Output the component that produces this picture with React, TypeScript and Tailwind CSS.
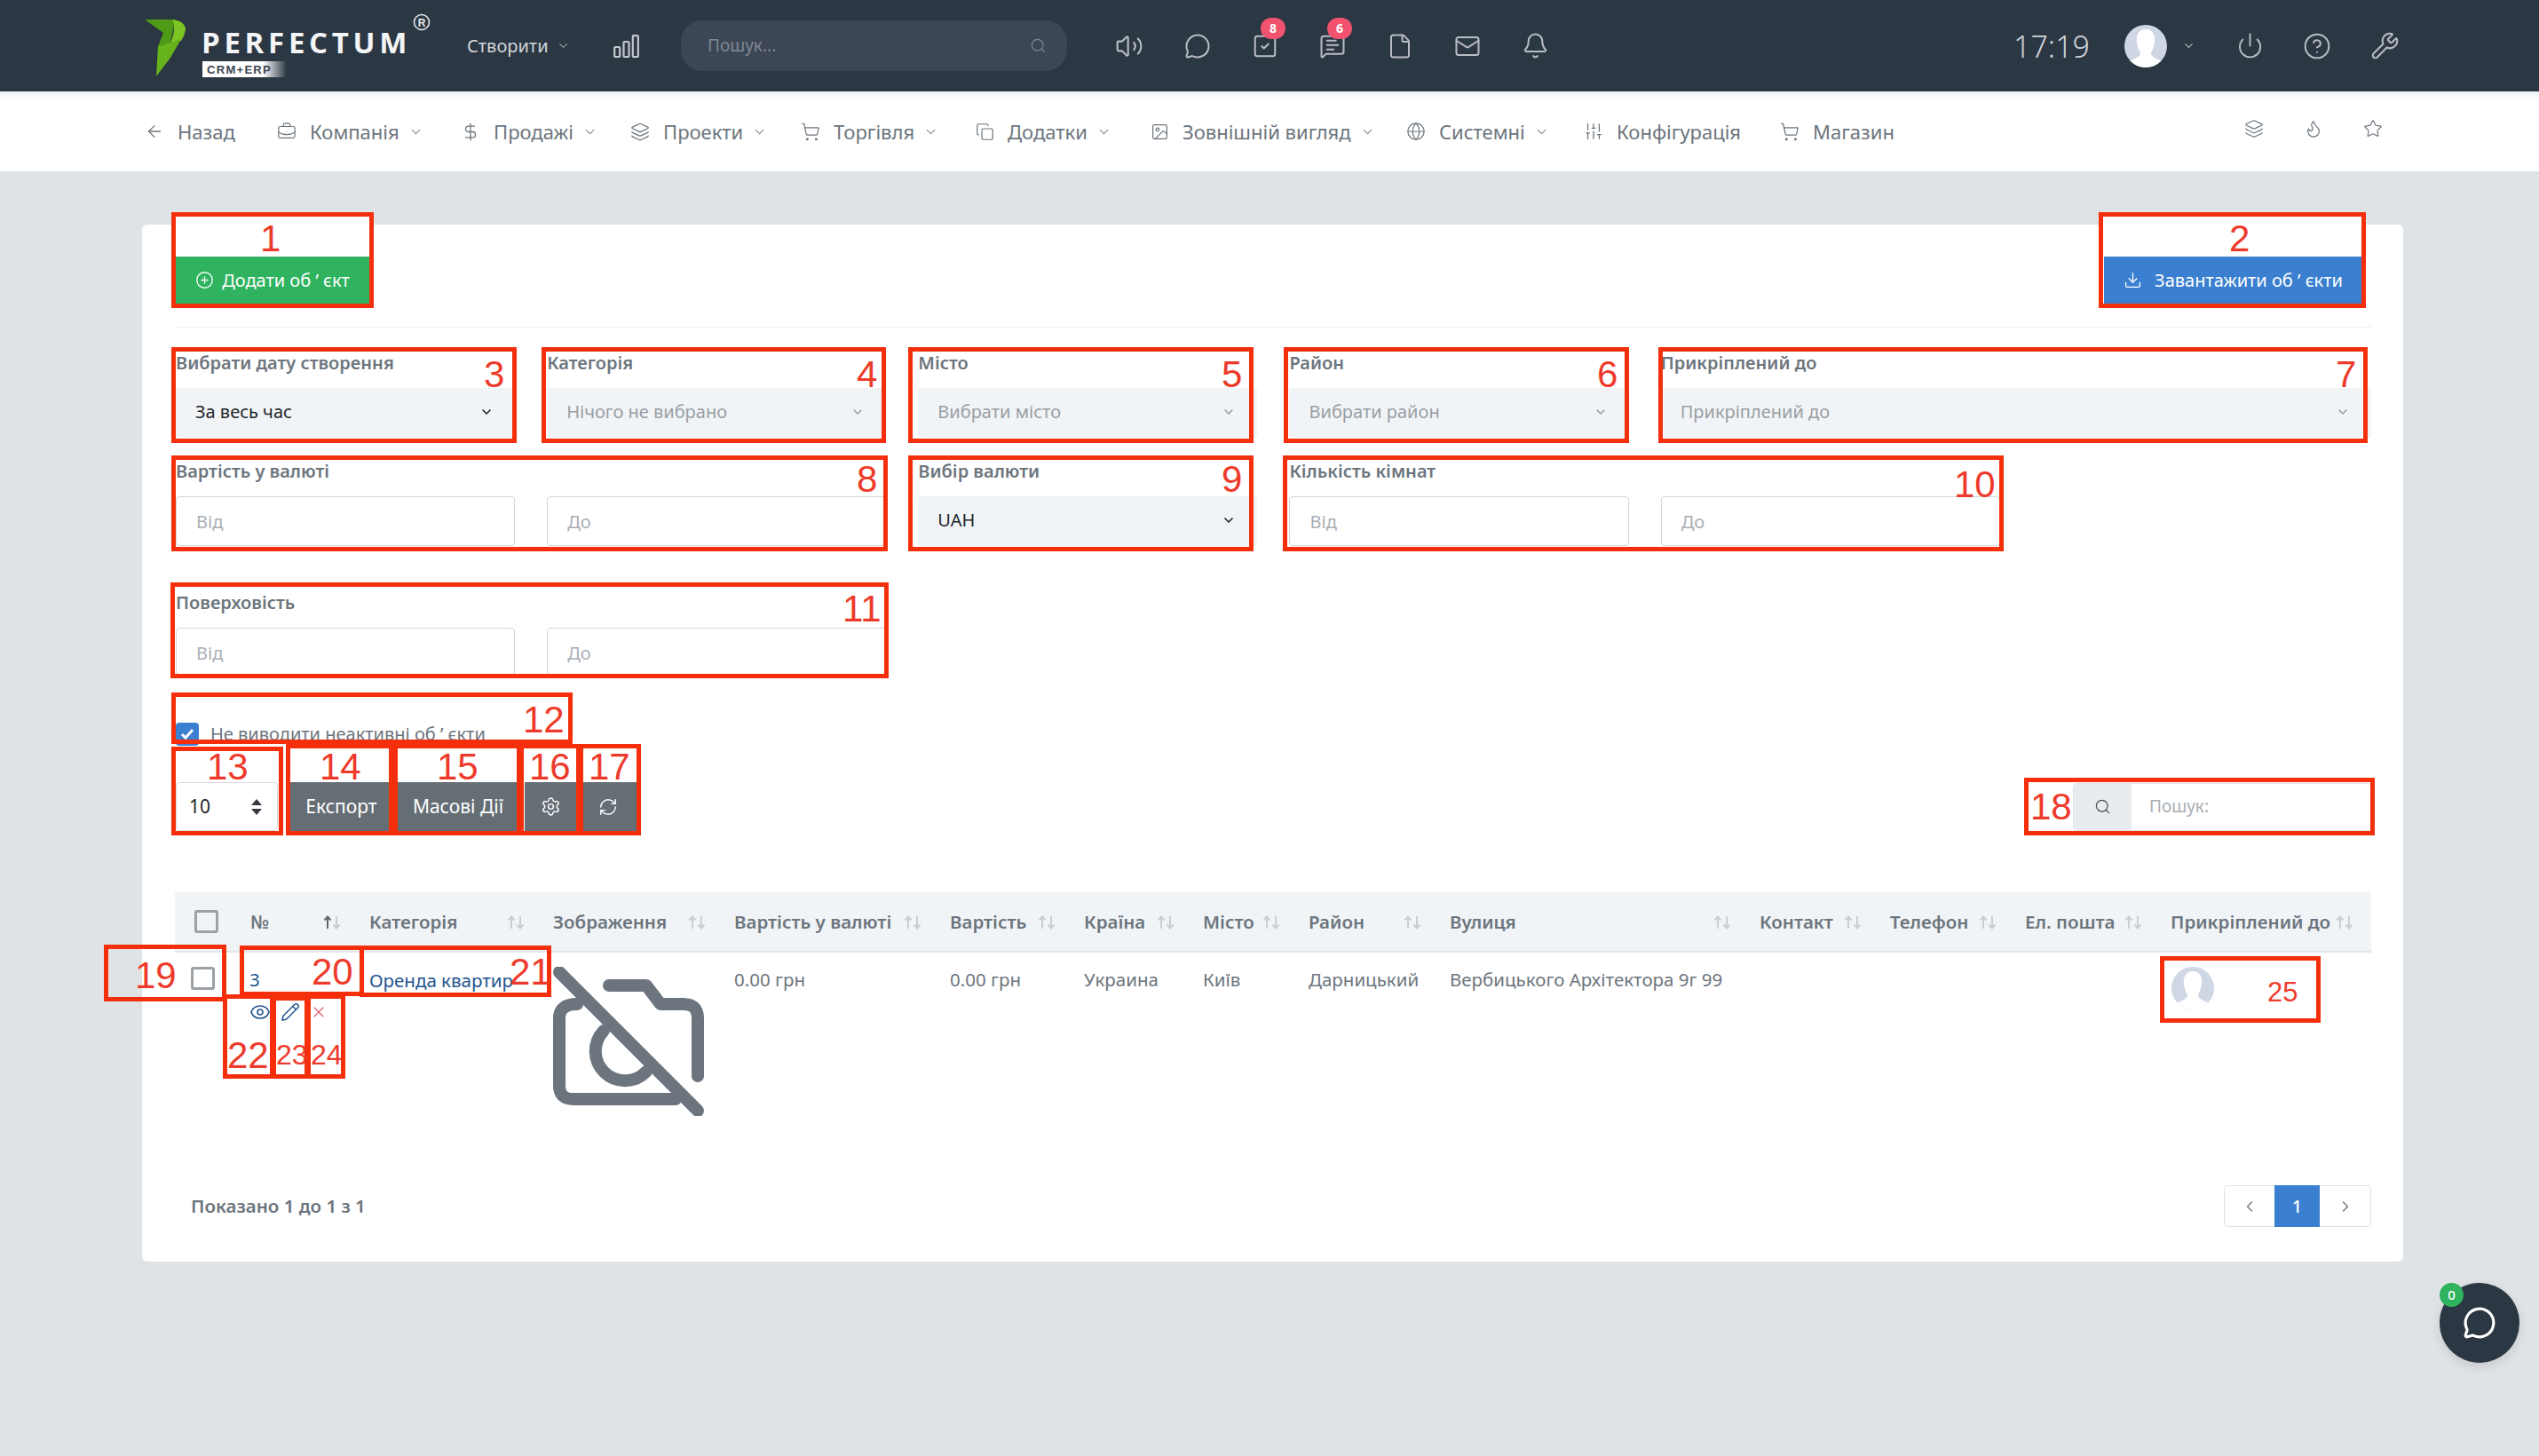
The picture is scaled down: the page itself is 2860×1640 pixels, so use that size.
import React from "react";
import {
  ArrowLeft, BriefcaseBusiness, ChevronDown, ChevronLeft, ChevronRight, CirclePlus, CircleHelp, Copy, DollarSign, Download,
  Eye, File, Flame, Globe, Image, Layers, Bell, Mail, MessageCircle, MessageSquareText, Pencil, Power, RefreshCw, Search, Settings,
  ShoppingCart, SlidersVertical, SquareCheck, Star, Volume2, Wrench, X,
} from "lucide-react";

const FONT = "font-['Noto_Sans','Open_Sans',sans-serif]";

function Logo() {
  return (
    <svg width="322" height="103" viewBox="163 0 322 103" className="shrink-0">
      <defs>
        <linearGradient id="fade" x1="0" x2="1" y1="0" y2="0">
          <stop offset="0.72" stopColor="#ffffff" />
          <stop offset="1" stopColor="#ffffff" stopOpacity="0" />
        </linearGradient>
      </defs>
      <polygon points="163,22 197,22 192,48 178,52 184,37" fill="#4f9a16" />
      <path d="M195,22 Q209,24 209,34 Q208,40 204,46 L192,48 Q198,36 195,22 Z" fill="#7cc522" />
      <polygon points="178,52 204,44 192,65 176,86" fill="#66b31c" />
      <text x="227" y="60" fontFamily="'Open Sans',sans-serif" fontWeight="700" fontSize="33" letterSpacing="4.7" fill="#f4f5f6">PERFECTUM</text>
      <circle cx="475" cy="25" r="8.5" fill="none" stroke="#e6e8ea" strokeWidth="1.6" />
      <text x="475" y="29.5" textAnchor="middle" fontFamily="'Liberation Sans',sans-serif" fontWeight="700" fontSize="12" fill="#e6e8ea">R</text>
      <rect x="228" y="69" width="95" height="18" fill="url(#fade)" />
      <text x="233" y="83" fontFamily="'Liberation Sans',sans-serif" fontWeight="700" fontSize="13" letterSpacing="1.3" fill="#3a4350">CRM+ERP</text>
    </svg>
  );
}

function Avatar() {
  return (
    <svg viewBox="0 0 48 48" className="w-[48px] h-[48px] shrink-0">
      <defs>
        <clipPath id="av"><circle cx="24" cy="24" r="24" /></clipPath>
      </defs>
      <g clipPath="url(#av)">
        <rect width="48" height="48" fill="#cfd6e4" />
        <path d="M24 5 C15 5 13 13 14 20 C15 26 17 29 18 32 C18 36 12 38 5 41 L5 48 L43 48 L43 41 C36 38 30 36 30 32 C31 29 33 26 34 20 C35 13 33 5 24 5 Z" fill="#ffffff" />
      </g>
    </svg>
  );
}

function Chart() {
  return (
    <svg width="29" height="26" viewBox="0 0 29 26" fill="none" stroke="#c4c8cd" strokeWidth="2.2" className="shrink-0">
      <rect x="1.2" y="14" width="6" height="11" rx="1" />
      <rect x="11.5" y="8" width="6" height="17" rx="1" />
      <rect x="21.8" y="1.2" width="6" height="23.8" rx="1" />
    </svg>
  );
}

function NavItem({ icon, label, chev, className }: { icon: React.ReactNode; label: string; chev?: boolean; className: string }) {
  return (
    <div className={`flex items-center shrink-0 ${className}`}>
      <span className="w-[22px] flex justify-center">{icon}</span>
      <span className="ml-[15px] text-[22px] text-[#6c757d] whitespace-nowrap">{label}</span>
      {chev && <ChevronDown size={17} strokeWidth={1.5} className="ml-[10px] text-[#7d858c]" />}
    </div>
  );
}

function Label({ children }: { children: React.ReactNode }) {
  return <div className="h-[40px] leading-[24px] text-[20px] font-semibold text-[#6c757d] whitespace-nowrap">{children}</div>;
}

function Select({ label, value, dark }: { label: string; value: string; dark?: boolean }) {
  return (
    <div>
      <Label>{label}</Label>
      <div className="h-[56px] bg-[#f1f4f7] rounded-[3px] pl-[22px] pr-[24px] pb-[2px] flex items-center justify-between">
        <span className={`text-[20px] ${dark ? "text-[#212529]" : "text-[#999ea4]"}`}>{value}</span>
        <ChevronDown size={16} strokeWidth={dark ? 2.5 : 2} className={dark ? "text-[#212529]" : "text-[#8f959b]"} />
      </div>
    </div>
  );
}

function Field({ placeholder }: { placeholder: string }) {
  return (
    <input
      placeholder={placeholder}
      className="w-full h-[56px] bg-white border border-[#d2d5d8] rounded-[4px] pl-[22px] text-[20px] placeholder:text-[#a9aeb4] outline-none"
    />
  );
}

function Range({ label }: { label: string }) {
  return (
    <div className="col-span-2">
      <Label>{label}</Label>
      <div className="grid grid-cols-2 gap-x-[36px]">
        <Field placeholder="Від" />
        <Field placeholder="До" />
      </div>
    </div>
  );
}

function SortIcon({ active }: { active?: boolean }) {
  return (
    <svg width="21" height="16" viewBox="0 0 21 16" fill="none" strokeWidth="2" className="absolute right-[19px] top-[26px]">
      <path d="M5 15V2M1.5 5.5L5 1.5L8.5 5.5" stroke={active ? "#5f666c" : "#c8ced3"} />
      <path d="M15 1V14M11.5 10.5L15 14.5L18.5 10.5" stroke="#c8ced3" />
    </svg>
  );
}

function Th({ label, active }: { label: string; active?: boolean }) {
  return (
    <th className="relative pl-[12px] text-left text-[20.5px] font-semibold text-[#6c757d] whitespace-nowrap">
      {label}
      <SortIcon active={active} />
    </th>
  );
}

function Box({ className }: { className: string }) {
  return <div className={`absolute border-[5px] border-[#f52f0c] pointer-events-none ${className}`} />;
}

function Num({ className, children }: { className: string; children: React.ReactNode }) {
  return <div className={`absolute font-['Liberation_Sans',sans-serif] leading-none text-[#ee3a2b] pointer-events-none ${className}`}>{children}</div>;
}

function CameraOff() {
  return (
    <svg width="170" height="168" viewBox="623 1088 170 168" fill="none" stroke="#6c757d" strokeWidth="14" strokeLinecap="round" strokeLinejoin="round">
      <path d="M630 1094L786 1250" />
      <path d="M686 1109H728L744 1130H770Q786 1130 786 1146V1211" />
      <path d="M650 1130Q630 1130 630 1146V1222Q630 1237 646 1237H761" />
      <path d="M680 1160A30 30 0 0 0 728 1206" />
    </svg>
  );
}

export default function App() {
  const iconTop = "text-[#b9bdc3]";
  return (
    <div className={`relative w-[2860px] h-[1640px] overflow-hidden bg-[#e0e3e5] ${FONT}`}>
      <header className="h-[103px] bg-[#2c3744] flex items-center pl-[163px] pr-[157px]">
        <Logo />
        <div className="ml-[41px] flex items-center text-[20px] text-[#d3d6da] whitespace-nowrap w-[165px]">
          Створити
          <ChevronDown size={15} strokeWidth={1.6} className="ml-[9px]" />
        </div>
        <Chart />
        <div className="ml-[47px] w-[435px] h-[57px] rounded-[24px] bg-[#3c4654] flex items-center justify-between pl-[30px] pr-[23px]">
          <span className="text-[19px] text-[#7f8893]">Пошук...</span>
          <Search size={19} strokeWidth={1.5} className="text-[#7f8893]" />
        </div>
        <div className={`ml-[54px] flex items-center gap-[46px] ${iconTop}`}>
          <Volume2 size={32} strokeWidth={1.6} />
          <MessageCircle size={30} strokeWidth={1.6} />
          <div className="relative">
            <SquareCheck size={30} strokeWidth={1.6} />
            <span className="absolute left-[10px] top-[-17px] w-[28px] h-[24px] rounded-full bg-[#f1536e] text-white text-[14px] font-bold flex items-center justify-center">8</span>
          </div>
          <div className="relative">
            <MessageSquareText size={30} strokeWidth={1.6} />
            <span className="absolute left-[9px] top-[-17px] w-[28px] h-[24px] rounded-full bg-[#f1536e] text-white text-[14px] font-bold flex items-center justify-center">6</span>
          </div>
          <File size={30} strokeWidth={1.6} />
          <Mail size={30} strokeWidth={1.6} />
          <Bell size={31} strokeWidth={1.6} />
        </div>
        <div className="ml-auto flex items-center">
          <span className="text-[34px] font-light text-[#cfd3d8] leading-none">17:19</span>
          <span className="ml-[39px]"><Avatar /></span>
          <ChevronDown size={15} strokeWidth={1.8} className="ml-[17px] text-[#b9bdc3]" />
          <div className={`ml-[46px] flex items-center gap-[44px] ${iconTop}`}>
            <Power size={31} strokeWidth={1.5} />
            <CircleHelp size={32} strokeWidth={1.5} />
            <Wrench size={33} strokeWidth={1.5} />
          </div>
        </div>
      </header>

      <nav className="h-[90px] bg-white shadow-[inset_0_14px_14px_-14px_#dfe1e4] flex items-center pl-[163px] pr-[176px]">
        <NavItem className="w-[149px]" label="Назад" icon={<ArrowLeft size={22} strokeWidth={1.4} className="text-[#6c757d]" />} />
        <NavItem className="w-[207px]" label="Компанія" chev icon={<BriefcaseBusiness size={22} strokeWidth={1.3} className="text-[#6c757d]" />} />
        <NavItem className="w-[191px]" label="Продажі" chev icon={<DollarSign size={23} strokeWidth={1.4} className="text-[#6c757d]" />} />
        <NavItem className="w-[192px]" label="Проекти" chev icon={<Layers size={23} strokeWidth={1.4} className="text-[#6c757d]" />} />
        <NavItem className="w-[196px]" label="Торгівля" chev icon={<ShoppingCart size={23} strokeWidth={1.3} className="text-[#6c757d]" />} />
        <NavItem className="w-[197px]" label="Додатки" chev icon={<Copy size={21} strokeWidth={1.4} className="text-[#6c757d]" />} />
        <NavItem className="w-[289px]" label="Зовнішній вигляд" chev icon={<Image size={21} strokeWidth={1.4} className="text-[#6c757d]" />} />
        <NavItem className="w-[200px]" label="Системні" chev icon={<Globe size={22} strokeWidth={1.3} className="text-[#6c757d]" />} />
        <NavItem className="w-[221px]" label="Конфігурація" icon={<SlidersVertical size={22} strokeWidth={1.4} className="text-[#6c757d]" />} />
        <NavItem className="w-[170px]" label="Магазин" icon={<ShoppingCart size={23} strokeWidth={1.4} className="text-[#6c757d]" />} />
        <div className="ml-auto flex items-center gap-[45px] text-[#6c757d] -mt-[6px]">
          <Layers size={22} strokeWidth={1.3} />
          <Flame size={22} strokeWidth={1.3} />
          <Star size={22} strokeWidth={1.3} />
        </div>
      </nav>

      <main className="pt-[60px] pl-[160px]">
        <div className="w-[2547px] h-[1168px] bg-white rounded-[6px] pl-[38px] pr-[36px]">
          <div className="pt-[36px] flex justify-between">
            <button className="w-[218px] h-[53px] bg-[#2fb35f] text-white text-[20px] flex items-center justify-center gap-[9px]">
              <CirclePlus size={21} strokeWidth={1.5} /> Додати об ʹ єкт
            </button>
            <button className="mr-[10px] w-[291px] h-[53px] bg-[#3a7fd0] text-white text-[20px] flex items-center justify-center gap-[14px]">
              <Download size={21} strokeWidth={1.5} /> Завантажити об ʹ єкти
            </button>
          </div>
          <div className="mt-[26px] h-px bg-[#eceef0]" />

          <div className="mt-[28px] grid grid-cols-6 gap-x-[36px]">
            <Select label="Вибрати дату створення" value="За весь час" dark />
            <Select label="Категорія" value="Нічого не вибрано" />
            <Select label="Місто" value="Вибрати місто" />
            <Select label="Район" value="Вибрати район" />
            <div className="col-span-2"><Select label="Прикріплений до" value="Прикріплений до" /></div>
          </div>
          <div className="mt-[26px] grid grid-cols-6 gap-x-[36px]">
            <Range label="Вартість у валюті" />
            <Select label="Вибір валюти" value="UAH" dark />
            <Range label="Кількість кімнат" />
          </div>
          <div className="mt-[52px] grid grid-cols-6 gap-x-[36px]">
            <Range label="Поверховість" />
          </div>

          <div className="mt-[51px] h-[26px] flex items-center">
            <span className="w-[26px] h-[26px] rounded-[4px] bg-[#3a7fd0] flex items-center justify-center">
              <svg width="16" height="14" viewBox="0 0 16 14" fill="none" stroke="#fff" strokeWidth="3"><path d="M2 7L6 11L14 2" /></svg>
            </span>
            <span className="ml-[13px] text-[20px] text-[#6c757d] whitespace-nowrap">Не виводити неактивні об ʹ єкти</span>
          </div>

          <div className="mt-[41px] flex items-center">
            <div className="w-[115px] h-[55px] border border-[#d8dadd] rounded-[4px] pl-[14px] pr-[17px] flex items-center justify-between text-[21px] text-[#212529]">
              10
              <svg width="12" height="20" viewBox="0 0 12 20" fill="#343a40"><path d="M6 1L12 8H0Z" /><path d="M6 19L0 12H12Z" /></svg>
            </div>
            <div className="ml-[13px] flex items-center gap-[4px] text-white text-[21px]">
              <div className="w-[117px] h-[55px] bg-[#666e75] flex items-center justify-center">Експорт</div>
              <div className="w-[138px] h-[55px] bg-[#666e75] flex items-center justify-center">Масові Дії</div>
              <div className="ml-[2px] w-[60px] h-[55px] bg-[#666e75] flex items-center justify-center pr-[2px]"><Settings size={23} strokeWidth={1.5} /></div>
              <div className="ml-[2px] w-[60px] h-[55px] bg-[#666e75] flex items-center justify-center pr-[4px]"><RefreshCw size={22} strokeWidth={1.5} /></div>
            </div>
            <div className="ml-auto flex h-[54px] border border-[#e2e4e6] rounded-[4px] w-[336px]">
              <div className="w-[65px] bg-[#e9ecef] flex items-center justify-center rounded-l-[4px]"><Search size={19} strokeWidth={1.6} className="text-[#495057]" /></div>
              <input placeholder="Пошук:" className="flex-1 min-w-0 pl-[20px] text-[19px] placeholder:text-[#a9aeb4] outline-none" />
            </div>
          </div>

          <table className="mt-[69px] w-[2474px] table-fixed border-collapse -ml-px">
            <colgroup>
              <col className="w-[73px]" /><col className="w-[134px]" /><col className="w-[207px]" /><col className="w-[204px]" />
              <col className="w-[243px]" /><col className="w-[151px]" /><col className="w-[134px]" /><col className="w-[119px]" />
              <col className="w-[159px]" /><col className="w-[349px]" /><col className="w-[147px]" /><col className="w-[152px]" />
              <col className="w-[164px]" /><col className="w-[238px]" />
            </colgroup>
            <thead>
              <tr className="h-[67px] bg-[#f1f4f7] border-b-2 border-[#e3e6e9]">
                <th className="pl-[22px] text-left"><span className="block w-[27px] h-[26px] border-[3px] border-[#9ba1a6] rounded-[3px]" /></th>
                <Th label="№" active />
                <Th label="Категорія" />
                <Th label="Зображення" />
                <Th label="Вартість у валюті" />
                <Th label="Вартість" />
                <Th label="Країна" />
                <Th label="Місто" />
                <Th label="Район" />
                <Th label="Вулиця" />
                <Th label="Контакт" />
                <Th label="Телефон" />
                <Th label="Ел. пошта" />
                <Th label="Прикріплений до" />
              </tr>
            </thead>
            <tbody className="text-[20.5px] text-[#6c757d]">
              <tr className="align-top">
                <td className="pl-[18px] pt-[16px]"><span className="block w-[27px] h-[26px] border-[3px] border-[#9ba1a6] rounded-[3px]" /></td>
                <td className="pl-[11px] pt-[16px]">
                  <div className="h-[28px] leading-[28px] text-[#22548f]">3</div>
                  <div className="mt-[11px] flex items-center">
                    <Eye size={24} strokeWidth={1.6} className="text-[#22548f]" />
                    <Pencil size={22} strokeWidth={1.6} className="ml-[11px] text-[#22548f]" />
                    <X size={20} strokeWidth={1.4} className="ml-[11px] text-[#e05a6d]" />
                  </div>
                </td>
                <td className="pl-[12px] pt-[16px] whitespace-nowrap"><span className="leading-[28px] text-[#22548f]">Оренда квартир</span></td>
                <td className="pl-[12px] pt-[16px]"><CameraOff /></td>
                <td className="pl-[12px] pt-[16px] leading-[28px]">0.00 грн</td>
                <td className="pl-[12px] pt-[16px] leading-[28px]">0.00 грн</td>
                <td className="pl-[12px] pt-[16px] leading-[28px]">Украина</td>
                <td className="pl-[12px] pt-[16px] leading-[28px]">Київ</td>
                <td className="pl-[12px] pt-[16px] leading-[28px]">Дарницький</td>
                <td className="pl-[12px] pt-[16px] leading-[28px] whitespace-nowrap">Вербицького Архітектора 9г 99</td>
                <td /><td /><td />
                <td className="pl-[13px] pt-[16px]"><Avatar /></td>
              </tr>
            </tbody>
          </table>

          <div className="mt-[78px] flex items-center justify-between pl-[17px]">
            <span className="text-[20.5px] font-semibold text-[#6c757d]">Показано 1 до 1 з 1</span>
            <div className="flex h-[47px] w-[166px] border border-[#e0e2e5] rounded-[4px] text-[#6c757d]">
              <div className="w-[56px] flex items-center justify-center"><ChevronLeft size={20} strokeWidth={1.6} /></div>
              <div className="w-[51px] bg-[#3a7fd0] text-white text-[20px] font-medium flex items-center justify-center -my-px">1</div>
              <div className="flex-1 flex items-center justify-center"><ChevronRight size={20} strokeWidth={1.6} /></div>
            </div>
          </div>
        </div>
      </main>

      <div className="absolute left-[2748px] top-[1445px] w-[90px] h-[90px] rounded-full bg-[#2c3744] shadow-[0_4px_12px_rgba(0,0,0,0.12)] flex items-center justify-center">
        <MessageCircle size={38} strokeWidth={2} className="text-white" />
        <span className="absolute left-0 top-0 w-[27px] h-[27px] rounded-full bg-[#2fb35f] text-white text-[15px] font-medium flex items-center justify-center">0</span>
      </div>

      {/* white strips of the marked areas, above the card's top edge */}
      <div className="absolute left-[198px] top-[244px] w-[218px] h-[9px] bg-white" />
      <div className="absolute left-[2369px] top-[244px] w-[291px] h-[9px] bg-white" />

      {/* red annotation frames and their numbers */}
      <Box className="left-[193px] top-[239px] w-[228px] h-[108px]" />
      <Box className="left-[2364px] top-[239px] w-[301px] h-[108px]" />
      <Box className="left-[193px] top-[391px] w-[389px] h-[108px]" />
      <Box className="left-[610px] top-[391px] w-[388px] h-[108px]" />
      <Box className="left-[1023px] top-[391px] w-[389px] h-[108px]" />
      <Box className="left-[1446px] top-[391px] w-[389px] h-[108px]" />
      <Box className="left-[1868px] top-[391px] w-[799px] h-[108px]" />
      <Box className="left-[193px] top-[513px] w-[807px] h-[108px]" />
      <Box className="left-[1023px] top-[513px] w-[389px] h-[108px]" />
      <Box className="left-[1445px] top-[513px] w-[812px] h-[108px]" />
      <Box className="left-[192px] top-[656px] w-[809px] h-[108px]" />
      <Box className="left-[193px] top-[780px] w-[452px] h-[58px]" />
      <Box className="left-[193px] top-[841px] w-[126px] h-[100px]" />
      <Box className="left-[322px] top-[838px] w-[121px] h-[103px]" />
      <Box className="left-[443px] top-[838px] w-[144px] h-[103px]" />
      <Box className="left-[585px] top-[838px] w-[69px] h-[103px]" />
      <Box className="left-[652px] top-[838px] w-[70px] h-[103px]" />
      <Box className="left-[2280px] top-[876px] w-[395px] h-[65px]" />
      <Box className="left-[117px] top-[1064px] w-[138px] h-[64px]" />
      <Box className="left-[270px] top-[1065px] w-[140px] h-[57px]" />
      <Box className="left-[405px] top-[1065px] w-[216px] h-[58px]" />
      <Box className="left-[251px] top-[1120px] w-[58px] h-[95px]" />
      <Box className="left-[306px] top-[1122px] w-[42px] h-[93px]" />
      <Box className="left-[345px] top-[1120px] w-[44px] h-[95px]" />
      <Box className="left-[2433px] top-[1077px] w-[181px] h-[75px]" />

      <Num className="text-[42px] left-[293px] top-[248px]">1</Num>
      <Num className="text-[42px] left-[2511px] top-[248px]">2</Num>
      <Num className="text-[42px] left-[545px] top-[401px]">3</Num>
      <Num className="text-[42px] left-[965px] top-[401px]">4</Num>
      <Num className="text-[42px] left-[1376px] top-[401px]">5</Num>
      <Num className="text-[42px] left-[1799px] top-[401px]">6</Num>
      <Num className="text-[42px] left-[2631px] top-[401px]">7</Num>
      <Num className="text-[42px] left-[965px] top-[519px]">8</Num>
      <Num className="text-[42px] left-[1376px] top-[519px]">9</Num>
      <Num className="text-[42px] left-[2201px] top-[525px]">10</Num>
      <Num className="text-[42px] left-[949px] top-[665px]">11</Num>
      <Num className="text-[42px] left-[589px] top-[790px]">12</Num>
      <Num className="text-[42px] left-[233px] top-[843px]">13</Num>
      <Num className="text-[42px] left-[360px] top-[843px]">14</Num>
      <Num className="text-[42px] left-[492px] top-[843px]">15</Num>
      <Num className="text-[42px] left-[596px] top-[843px]">16</Num>
      <Num className="text-[42px] left-[663px] top-[843px]">17</Num>
      <Num className="text-[42px] left-[2287px] top-[888px]">18</Num>
      <Num className="text-[42px] left-[152px] top-[1078px]">19</Num>
      <Num className="text-[42px] left-[351px] top-[1074px]">20</Num>
      <Num className="text-[42px] left-[574px] top-[1074px]">21</Num>
      <Num className="text-[42px] left-[256px] top-[1168px]">22</Num>
      <Num className="text-[32px] left-[311px] top-[1172px]">23</Num>
      <Num className="text-[32px] left-[350px] top-[1172px]">24</Num>
      <Num className="text-[31px] left-[2554px] top-[1102px]">25</Num>
    </div>
  );
}
